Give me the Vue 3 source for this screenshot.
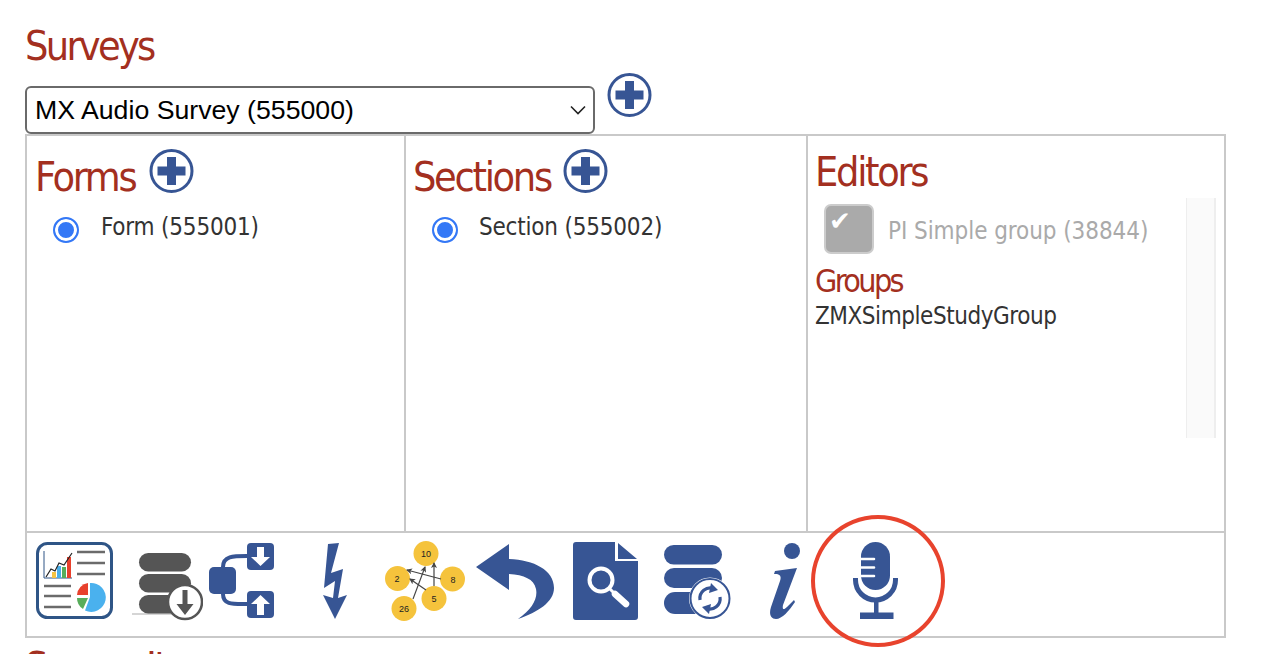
<script setup>
const plusCircle = { cx: 22.5, cy: 23 }
</script>

<template>
  <div class="page">
    <h1 class="h-surveys">Surveys</h1>
    <div class="select-row">
      <div class="select-wrap">
        <select class="survey-select">
          <option>MX Audio Survey (555000)</option>
        </select>
        <svg class="chevron" width="18" height="10" viewBox="0 0 18 10"><path d="M2 1.5 L9 8.5 L16 1.5" fill="none" stroke="#222" stroke-width="1.6"/></svg>
      </div>
      <svg class="plus plus-survey" width="45" height="46" viewBox="0 0 45 46">
        <circle :cx="plusCircle.cx" :cy="plusCircle.cy" r="20.5" fill="#fff" stroke="#375594" stroke-width="3"/>
        <path d="M18 9 h9 v9.500 h9.500 v9 h-9.500 v9.500 h-9 v-9.500 h-9.500 v-9 h9.500 z" fill="#375594"/>
      </svg>
    </div>

    <div class="board">
      <div class="cols">
        <section class="col col-forms">
          <div class="col-head">
            <h2>Forms</h2>
            <svg class="plus" width="45" height="46" viewBox="0 0 45 46">
              <circle :cx="plusCircle.cx" :cy="plusCircle.cy" r="20.5" fill="#fff" stroke="#375594" stroke-width="3"/>
              <path d="M18 9 h9 v9.500 h9.500 v9 h-9.500 v9.500 h-9 v-9.500 h-9.500 v-9 h9.500 z" fill="#375594"/>
            </svg>
          </div>
          <label class="radio-row"><span class="radio"></span><span>Form (555001)</span></label>
        </section>
        <section class="col col-sections">
          <div class="col-head">
            <h2>Sections</h2>
            <svg class="plus" width="45" height="46" viewBox="0 0 45 46">
              <circle :cx="plusCircle.cx" :cy="plusCircle.cy" r="20.5" fill="#fff" stroke="#375594" stroke-width="3"/>
              <path d="M18 9 h9 v9.500 h9.500 v9 h-9.500 v9.500 h-9 v-9.500 h-9.500 v-9 h9.500 z" fill="#375594"/>
            </svg>
          </div>
          <label class="radio-row"><span class="radio"></span><span>Section (555002)</span></label>
        </section>
        <section class="col col-editors">
          <h2 class="h-editors">Editors</h2>
          <div class="editor-body">
            <div class="editor-list">
              <div class="check-row">
                <span class="check">✔</span>
                <span class="check-label">PI Simple group (38844)</span>
              </div>
              <h3>Groups</h3>
              <div class="group-name">ZMXSimpleStudyGroup</div>
            </div>
            <div class="scroll-track"></div>
          </div>
        </section>
      </div>

      <div class="toolbar">
        <!-- report -->
        <svg class="i-report" width="77" height="77" viewBox="0 0 77 77">
          <rect x="1.5" y="1.5" width="74" height="74" rx="10" fill="#fff" stroke="#2f5586" stroke-width="3"/>
          <path d="M8 9 V36 H36" fill="none" stroke="#2f5586" stroke-width="1"/>
          <rect x="16" y="30" width="4" height="6" fill="#f6c342"/>
          <rect x="21" y="24" width="4" height="12" fill="#4aaee8"/>
          <rect x="26" y="25" width="4" height="11" fill="#58ad5b"/>
          <rect x="31" y="15" width="4" height="21" fill="#e8402c"/>
          <path d="M10 35 L15 27 L19 29 L23 21 L28 23 L36 11" fill="none" stroke="#222" stroke-width="1.2"/>
          <path d="M41 10 H69 M41 21 H69 M41 32 H69 M8 44 H35 M8 54 H35 M8 65 H35" stroke="#6b6b6b" stroke-width="2.6" fill="none"/>
          <path d="M54 41 A14.5 14.5 0 1 1 49 68.5 L54 55 Z" fill="#4ab1ee"/>
          <path d="M52 41 V53 L41 53 A13 13 0 0 1 52 41 Z" fill="#e8402c"/>
          <path d="M41 56 H52 L47 67 A13 13 0 0 1 41 56 Z" fill="#58ad5b"/>
        </svg>
        <!-- database download -->
        <svg class="i-dbdown" width="71" height="70" viewBox="0 0 71 70">
          <rect x="0" y="61" width="40" height="2" fill="#d5d5d5"/>
          <rect x="7" y="1" width="52" height="18.5" rx="9.2" fill="#555"/>
          <rect x="7" y="22" width="52" height="18.5" rx="9.2" fill="#555"/>
          <rect x="7" y="43" width="52" height="18.5" rx="9.2" fill="#555"/>
          <circle cx="53" cy="50" r="17" fill="#fff" stroke="#555" stroke-width="2.5"/>
          <path d="M50.5 38 h5 v14 h6 l-8.5 11 l-8.5 -11 h6 z" fill="#555"/>
        </svg>
        <!-- tree -->
        <svg class="i-tree" width="65" height="76" viewBox="0 0 65 76">
          <path d="M14 24 C14 13 24 13 38 13 M14 51 C14 62 24 61 38 61" fill="none" stroke="#375594" stroke-width="4"/>
          <rect x="0" y="24" width="27" height="27" rx="5" fill="#375594"/>
          <rect x="38" y="0" width="27" height="27" rx="4" fill="#375594"/>
          <rect x="38" y="48" width="27" height="27" rx="4" fill="#375594"/>
          <path d="M48 4 h7 v10 h6 l-9.500 9 l-9.500 -9 h6 z" fill="#fff"/>
          <path d="M48 72 h7 v-11 h6 l-9.500 -9 l-9.500 9 h6 z" fill="#fff"/>
        </svg>
        <!-- bolt -->
        <svg class="i-bolt" width="24" height="76" viewBox="0 0 24 76">
          <path d="M5 1 L16 0 L8 30 L20 26 L15 55 L24 52 L12 76 L0 52 L10 55 L12 38 L1 45 Z" fill="#375594"/>
        </svg>
        <!-- network -->
        <svg class="i-net" width="80" height="80" viewBox="0 0 80 80">
          <defs>
            <marker id="ah" markerUnits="userSpaceOnUse" markerWidth="6" markerHeight="6" refX="5" refY="3" orient="auto"><path d="M0 0 L6 3 L0 6 L1.500 3 Z" fill="#444"/></marker>
          </defs>
          <g fill="#f5c33c">
            <circle cx="41" cy="12.500" r="12.500"/>
            <circle cx="12.500" cy="37.500" r="12.500"/>
            <circle cx="67.500" cy="38" r="12.500"/>
            <circle cx="49" cy="57.500" r="12.500"/>
            <circle cx="19" cy="67.500" r="12.500"/>
          </g>
          <g stroke="#444" stroke-width="1.200" fill="none">
            <path d="M56 38 L22 29" marker-end="url(#ah)"/>
            <path d="M41 49 L25 38" marker-end="url(#ah)"/>
            <path d="M28 58 L40 26" marker-end="url(#ah)"/>
            <path d="M49 45 L49 22" marker-end="url(#ah)"/>
          </g>
          <g class="net-text" text-anchor="middle" fill="#222">
            <text x="41" y="15.500">10</text>
            <text x="12" y="40.500">2</text>
            <text x="68" y="41.500">8</text>
            <text x="49" y="60.500">5</text>
            <text x="19" y="70.500">26</text>
          </g>
        </svg>
        <!-- back -->
        <svg class="i-back" width="78" height="75" viewBox="0 0 78 75">
          <path d="M0 23 L33 0 V15 C58 16 78 26 78 44 C78 58 62 68 42 75 C56 65 62 55 60 45 C58 35 48 31 33 30 V46 Z" fill="#375594"/>
        </svg>
        <!-- doc search -->
        <svg class="i-doc" width="65" height="78" viewBox="0 0 65 78">
          <path d="M3 0 H42 V19 H65 V75 a3 3 0 0 1 -3 3 H3 a3 3 0 0 1 -3 -3 V3 a3 3 0 0 1 3 -3 Z" fill="#375594"/>
          <path d="M45 1 L64 17 H45 Z" fill="#375594"/>
          <circle cx="28" cy="38" r="11.500" fill="none" stroke="#fff" stroke-width="4"/>
          <path d="M37 47 L42 52" stroke="#fff" stroke-width="3"/>
          <path d="M42 52 L53 62" stroke="#fff" stroke-width="6.500" stroke-linecap="round"/>
        </svg>
        <!-- db sync -->
        <svg class="i-dbsync" width="67" height="76" viewBox="0 0 67 76">
          <rect x="0" y="1" width="58" height="19.500" rx="9.700" fill="#375594"/>
          <rect x="0" y="24" width="58" height="20" rx="10" fill="#375594"/>
          <rect x="0" y="48" width="58" height="22" rx="11" fill="#375594"/>
          <circle cx="46" cy="54.500" r="21" fill="#fff"/>
          <circle cx="46" cy="54.500" r="19.500" fill="none" stroke="#375594" stroke-width="2"/>
          <path d="M36 56 A10.500 10.500 0 0 1 50 44.500" fill="none" stroke="#375594" stroke-width="3.200"/>
          <path d="M56 53 A10.500 10.500 0 0 1 42 64.500" fill="none" stroke="#375594" stroke-width="3.200"/>
          <path d="M47 39 L54 46 L45 49 Z M45 70 L38 63 L47 60 Z" fill="#375594"/>
        </svg>
        <!-- info -->
        <svg class="i-info" width="31" height="77" viewBox="0 0 31 77">
          <circle cx="22" cy="8" r="8" fill="#375594"/>
          <path d="M5 28 L27 25 L13 62 C12 67 14 67 17 64 L24 57 L25 59 C19 68 12 76 6 76 C0 76 -1 70 1 64 L10 38 C12 32 9 31 4 31 Z" fill="#375594"/>
        </svg>
        <!-- mic -->
        <div class="mic-wrap">
          <svg class="i-mic" width="45" height="77" viewBox="0 0 45 77">
            <rect x="8" y="0" width="29" height="48" rx="14.500" fill="#375594"/>
            <path d="M6 17 H21 M6 25.500 H21 M6 34 H21" stroke="#fff" stroke-width="2.600" stroke-linecap="round"/>
            <path d="M2.500 36 V38 A20 20 0 0 0 42.500 38 V36" fill="none" stroke="#375594" stroke-width="5"/>
            <rect x="21" y="56" width="4.500" height="15" fill="#375594"/>
            <rect x="7" y="70.500" width="33.500" height="6.500" fill="#375594"/>
          </svg>
          <span class="annotation"></span>
        </div>
      </div>
    </div>

    <h1 class="h-items">Survey Items</h1>
  </div>
</template>

<style>
html, body { margin: 0; background: #fff; overflow: hidden; }
</style>

<style scoped>
.page {
  height: 654px;
  box-sizing: border-box;
  overflow: hidden;
  padding: 24px 0 0 25px;
  font-family: "DejaVu Sans Condensed", "DejaVu Sans", sans-serif;
  font-stretch: condensed;
  color: #333;
}
h1, h2, h3 { margin: 0; font-weight: 400; color: #a32f20; }
.h-surveys { font-size: 41px; line-height: 44px; letter-spacing: -2.7px; height: 62px; }
.select-row { display: flex; align-items: flex-start; height: 48px; margin-top: 0; }
.select-wrap { position: relative; width: 570px; height: 48px; }
.survey-select {
  appearance: none;
  width: 100%;
  height: 100%;
  box-sizing: border-box;
  background: #fff;
  border: 2px solid #6a6a6a;
  border-radius: 6px;
  padding: 0 0 0 8px;
  font: 26.700px "Liberation Sans", sans-serif;
  color: #000;
}
.chevron { position: absolute; right: 8px; top: 19px; pointer-events: none; }
.plus { display: block; flex: none; }
.plus-survey { margin: -14px 0 0 12px; }
.board {
  width: 1201px;
  box-sizing: border-box;
  border: 2px solid #c9c9c9;
}
.cols { display: grid; grid-template-columns: 377px 402px 1fr; height: 395px; }
.col + .col { border-left: 2px solid #c9c9c9; }
.col-forms { padding: 12px 0 0 8px; }
.col-sections { padding: 12px 0 0 7px; }
.col-editors { padding: 12px 8px 0 7px; }
.col-head { display: flex; align-items: flex-start; height: 65px; }
.col-forms .col-head { gap: 14px; }
.col-sections .col-head { gap: 12px; }
h2 { font-size: 41px; line-height: 58px; letter-spacing: -2.3px; }
.h-editors { line-height: 49px; height: 50px; }
.radio-row { display: flex; align-items: flex-start; margin-left: 18px; font-size: 24px; line-height: 28px; letter-spacing: -.2px; gap: 22px; }
.col-sections .radio-row { margin-left: 19px; gap: 21px; }
.radio {
  width: 26px; height: 26px; box-sizing: border-box; flex: none; border-radius: 50%;
  border: 2px solid #3478f6; background: #3478f6; box-shadow: inset 0 0 0 3px #fff; margin-top: 4px;
}
.editor-body { display: flex; justify-content: space-between; height: 240px; }
.editor-list { flex: 1; }
.check-row { display: flex; align-items: center; margin: 6px 0 0 9px; height: 50px; gap: 14px; }
.check {
  width: 50px; height: 50px; box-sizing: border-box; flex: none;
  background: #aaa; border: 2px solid #ccc; border-radius: 7px;
  color: #fff; font: 26px/30px "DejaVu Sans", sans-serif; padding-left: 3px;
}
.check-label { font-size: 24px; letter-spacing: -.07px; color: #aaa; padding-top: 3px; }
h3 { font-size: 32px; line-height: 40px; letter-spacing: -2.600px; margin-top: 7px; }
.group-name { font-size: 24px; line-height: 30px; letter-spacing: -.45px; }
.scroll-track { width: 30px; box-sizing: border-box; background: #fafafa; border-left: 1px solid #eee; border-right: 2px solid #eee; }
.toolbar { display: flex; align-items: flex-start; height: 102px; border-top: 2px solid #c9c9c9; padding: 1px 0 0 9px; }
.toolbar svg { display: block; flex: none; }
.i-report { margin: 8px 0 0 0; }
.i-dbdown { margin: 18px 0 0 19px; }
.i-tree { margin: 9px 0 0 6px; }
.i-bolt { margin: 9px 0 0 49px; }
.i-net { margin: 7px 0 0 38px; }
.i-back { margin: 10px 0 0 11px; }
.i-doc { margin: 8px 0 0 19px; }
.i-dbsync { margin: 10px 0 0 26px; }
.i-info { margin: 9px 0 0 39px; }
.mic-wrap { position: relative; margin: 8px 0 0 52px; }
.annotation {
  position: absolute; left: -42px; top: -27px; width: 134px; height: 132px;
  box-sizing: border-box; border: 4px solid #e8432d; border-radius: 50%;
}
.net-text { font: 9px "Liberation Sans", sans-serif; }
.h-items { font-size: 41px; line-height: 44px; letter-spacing: -2.7px; margin-top: 7px; }
</style>
